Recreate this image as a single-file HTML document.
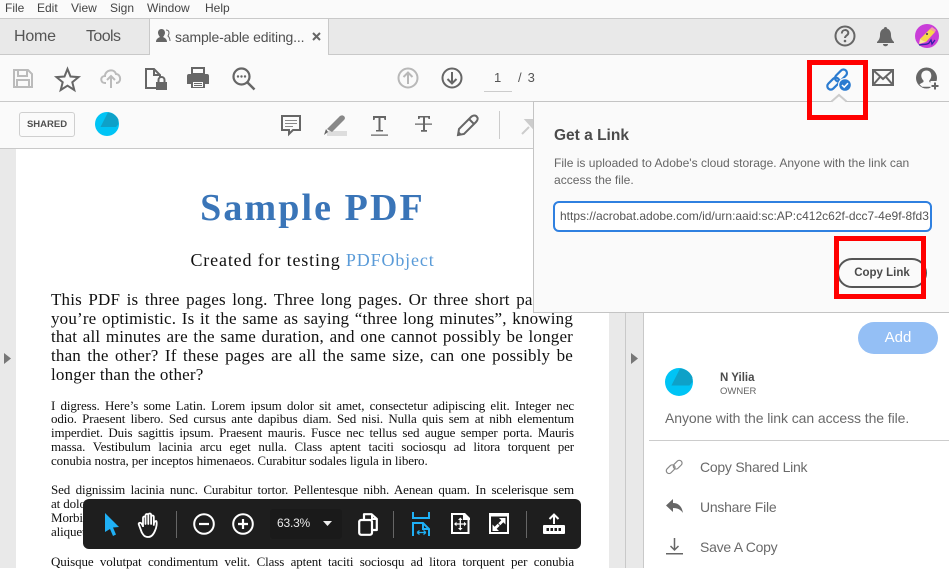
<!DOCTYPE html>
<html><head><meta charset="utf-8"><style>
html,body{margin:0;padding:0}
body{width:949px;height:568px;overflow:hidden;position:relative;background:#fff;font-family:"Liberation Sans",sans-serif;color:#4b4b4b}
.a{position:absolute;white-space:nowrap}
.b{position:absolute}
.m{top:1px;font-size:12px;line-height:14px;color:#444}
.l{position:absolute;left:51px;width:522px;font-family:"Liberation Serif",serif;color:#111;text-align:justify;text-align-last:justify;height:20px;overflow:hidden}
.big{font-size:17px;line-height:18px;letter-spacing:.17px}
.sm{font-size:13px;line-height:14px;left:51px;letter-spacing:-.12px;width:523px}
.left{text-align-last:left}
.r{font-size:14px;line-height:18px;color:#6a6a6a;left:700px;letter-spacing:-.25px}
svg{position:absolute;overflow:visible}
</style></head><body>
<div class="b" style="left:0;top:0;width:949px;height:148px;background:#fafafa"></div>
<div class="b" style="left:0;top:18px;width:949px;height:37px;background:#e9e9e9;border-top:1px solid #c9c9c9;border-bottom:1px solid #c9c9c9;box-sizing:border-box"></div>
<div class="b" style="left:149px;top:18px;width:180px;height:37px;background:#fafafa;border:1px solid #c9c9c9;border-bottom:0;box-sizing:border-box"></div>
<div class="b" style="left:0;top:101px;width:949px;height:1px;background:#c9c9c9"></div>
<div class="b" style="left:0;top:148px;width:949px;height:1px;background:#c9c9c9"></div>
<div class="a m" style="left:5px">File</div><div class="a m" style="left:37px">Edit</div><div class="a m" style="left:71px">View</div><div class="a m" style="left:110px">Sign</div><div class="a m" style="left:147px">Window</div><div class="a m" style="left:205px">Help</div>
<div class="a" style="left:14px;top:27px;font-size:16px;line-height:20px;color:#555;letter-spacing:-.2px">Home</div>
<div class="a" style="left:86px;top:27px;font-size:16px;line-height:20px;color:#555;letter-spacing:-.6px">Tools</div>
<svg style="left:155px;top:29px" width="16" height="14" viewBox="0 0 16 14"><path fill="#666" d="M1 13c0-3 2-4 4-5-1-1-2-3-2-4 0-2 1-4 3.500-4S10 2 10 4c0 1-1 3-2 4 2 1 4 2 4 5z"/><path fill="none" stroke="#666" d="M11 1c2 0 3 1 3 3 0 1-1 3-1 3 1 1 2 2 2 5"/></svg>
<div class="a" style="left:175px;top:28px;font-size:14px;line-height:18px;color:#505050;letter-spacing:-.17px">sample-able editing...</div>
<svg style="left:312px;top:32px" width="9" height="9"><path d="M1 1l7 7M8 1L1 8" stroke="#666" stroke-width="2"/></svg>

<!-- toolbar -->
<svg style="left:13px;top:68px" width="20" height="20" viewBox="0 0 20 20"><path fill="none" stroke="#bbb" stroke-width="2" d="M1 2h14l4 4v13H1zM5 2v6h9V2M4 19v-7h12v7"/></svg>
<svg style="left:55px;top:67px" width="25" height="24" viewBox="0 0 25 24"><path fill="none" stroke="#666" stroke-width="2" d="M12.500 2l3 7.500 8 .6-6.200 5.100 2 7.800-6.800-4.300-6.800 4.300 2-7.800L1.500 10.100l8-.6z"/></svg>
<svg style="left:100px;top:68px" width="22" height="21" viewBox="0 0 22 21"><path fill="none" stroke="#bbb" stroke-width="2" d="M6 15H5c-5 0-5-7 0-7 0-6 9-8 11-2 5 0 6 9 0 9M11 20V9M7 12l4-4 4 4"/></svg>
<svg style="left:145px;top:67px" width="23" height="24" viewBox="0 0 23 24"><path fill="none" stroke="#666" stroke-width="2" d="M12 21H1V2h8l6 6v3M9 2v6h6"/><path fill="#666" d="M11 15h11v8H11z"/><path fill="none" stroke="#666" stroke-width="2" d="M13.500 15v-2a3 3 0 0 1 6 0v2"/></svg>
<svg style="left:187px;top:67px" width="22" height="21" viewBox="0 0 22 21"><path fill="#666" d="M4 0h14v7h2a2 2 0 0 1 2 2v8h-4v-4H4v4H0V9a2 2 0 0 1 2-2h2z"/><path fill="#666" d="M4 13h14v8H4z"/><path fill="#fafafa" d="M6 2h10v4H6zM6 15h10v5H6z"/><path stroke="#666" d="M7 16.500h8M7 18.500h8"/></svg>
<svg style="left:232px;top:67px" width="24" height="24" viewBox="0 0 24 24"><circle cx="9.500" cy="9.500" r="8" fill="none" stroke="#666" stroke-width="2.200"/><path d="M15 15l7.500 7.500" stroke="#666" stroke-width="2.500"/><circle cx="6" cy="9.500" r="1.200" fill="#666"/><circle cx="9.500" cy="9.500" r="1.200" fill="#666"/><circle cx="13" cy="9.500" r="1.200" fill="#666"/></svg>
<svg style="left:397px;top:67px" width="22" height="22" viewBox="0 0 22 22"><circle cx="11" cy="11" r="9.500" fill="none" stroke="#b8b8b8" stroke-width="2"/><path d="M11 17V5.500M6.500 10L11 5.500 15.500 10" fill="none" stroke="#b8b8b8" stroke-width="2"/></svg>
<svg style="left:441px;top:67px" width="22" height="22" viewBox="0 0 22 22"><circle cx="11" cy="11" r="9.500" fill="none" stroke="#666" stroke-width="2"/><path d="M11 5v11.500M6.500 12l4.500 4.500 4.500-4.500" fill="none" stroke="#666" stroke-width="2"/></svg>
<div class="a" style="left:494px;top:70px;font-size:13px;line-height:15px;color:#555">1</div>
<div class="b" style="left:484px;top:91px;width:28px;height:1px;background:#ccc"></div>
<div class="a" style="left:518px;top:70px;font-size:13px;line-height:15px;color:#555;letter-spacing:-.4px">/&nbsp; 3</div>

<svg style="left:827px;top:68px" width="24" height="24" viewBox="0 0 24 24"><g fill="none" stroke="#2b7bd0" stroke-width="2.200"><rect x="0" y="10" width="14" height="7" rx="3.500" transform="rotate(-45 7 13.500) translate(-2 1)"/><rect x="7" y="4" width="14" height="7" rx="3.500" transform="rotate(-45 14 7.500)"/></g><circle cx="18" cy="17" r="7" fill="#fafafa"/><circle cx="18" cy="17" r="5.800" fill="#2b7bd0"/><path d="M15 17l2.200 2.200 3.800-4" fill="none" stroke="#fff" stroke-width="1.500"/></svg>
<svg style="left:872px;top:69px" width="22" height="17" viewBox="0 0 22 17"><path fill="none" stroke="#666" stroke-width="2" d="M1 1h20v15H1zM1 1l10 9 10-9M1 16l7-8M21 16l-7-8"/></svg>
<svg style="left:916px;top:67px" width="24" height="23" viewBox="0 0 24 23"><circle cx="10.500" cy="11" r="10.500" fill="#666"/><path fill="#fafafa" d="M10.500 3.500c3.500 0 4.800 2.700 4.800 5.200 0 2-1 3.800-2 4.800v1.500l3.500 1.800-1.500 3H6l-2.500-2.500 4-2.300v-1.500c-1-1-2.200-2.800-2.200-4.800 0-2.500 1.500-5.200 5.200-5.200z"/><path fill="#fafafa" d="M14.500 14h9.500v9h-9.500z"/><path d="M19 15.500v7M15.500 19h7" stroke="#666" stroke-width="2"/></svg>

<svg style="left:834px;top:25px" width="22" height="22" viewBox="0 0 22 22"><circle cx="11" cy="11" r="9.500" fill="none" stroke="#666" stroke-width="2"/><path d="M7.800 8.500c0-4.500 6.500-4.500 6.500-.5 0 2.500-3.300 2.500-3.300 5" fill="none" stroke="#666" stroke-width="2"/><circle cx="11" cy="16" r="1.300" fill="#666"/></svg>
<svg style="left:877px;top:26px" width="17" height="21" viewBox="0 0 17 21"><path fill="#666" d="M8.500 1c1 0 1.500.6 1.500 1.500C13 3.500 14 6 14 9c0 3 1 5 3 7v1H0v-1c2-2 3-4 3-7 0-3 1-5.500 4-6.500C7 1.600 7.500 1 8.500 1zM6 18h5c0 3-5 3-5 0z"/></svg>
<svg style="left:915px;top:24px" width="24" height="24" viewBox="0 0 24 24"><circle cx="12" cy="12" r="12" fill="#c93ed8"/><path d="M5 15L15 5l5 3-9 10z" fill="#f6d94a"/><path d="M15 5l2-2 4 3-1 2z" fill="#f3a0a0"/><path d="M5 15l-1 5 7-2z" fill="#fbe99a"/><path d="M4 21c5-1 8 0 10-2l2-3 1 4 3-4" fill="none" stroke="#3322aa" stroke-width="1.300"/><circle cx="12" cy="10" r="1" fill="#335"/></svg>

<!-- second toolbar -->
<div class="a" style="left:19px;top:112px;width:56px;height:25px;box-sizing:border-box;border:1.500px solid #cfcfcf;border-radius:3px;background:#fafafa;text-align:center;font-size:9.500px;font-weight:bold;line-height:23px;color:#505050">SHARED</div>
<svg style="left:95px;top:112px" width="24" height="24" viewBox="0 0 24 24"><circle cx="12" cy="12" r="12" fill="#00c4f5"/><path d="M5.500 15L13 .3C18 1 22 4 23.500 8v4l-2.500 3z" fill="#0ea1c8"/></svg>
<svg style="left:281px;top:115px" width="20" height="21" viewBox="0 0 20 21"><path fill="none" stroke="#666" stroke-width="2" d="M1 1h18v14h-7l-4 4v-4H1z"/><path stroke="#888" d="M4 5.500h12M4 8.500h12M4 11.500h8"/></svg>
<svg style="left:324px;top:114px" width="23" height="22" viewBox="0 0 23 22"><path d="M3 17h20v5H3z" fill="#ddd"/><path d="M0 21l4-3-2-3z" fill="#666"/><path d="M3 15L15 3c3-4 8 0 5 3L8 18z" fill="#888"/></svg>
<svg style="left:371px;top:115px" width="17" height="21" viewBox="0 0 17 21"><path fill="#666" d="M2 1h13v4h-1.500L13 3H9.500v12H12v1.500H5V15h2.500V3H4L3.500 5H2zM0 19.500h17v1.300H0z"/></svg>
<svg style="left:415px;top:115px" width="18" height="19" viewBox="0 0 18 19"><path fill="#666" d="M3 1h12v3h-1.500L13 2.500H10V15h2v1.700H6V15h2V2.500H5L4.500 4H3zM0 8.500h17v1.200H0z"/></svg>
<svg style="left:456px;top:114px" width="23" height="23" viewBox="0 0 23 23"><path fill="none" stroke="#666" stroke-width="2" d="M2 21l1-6L15 3c2-2 5-2 6 0 1 1 1 3-1 5L8 20zM13 5l5 5"/><path fill="#666" d="M1 22l1.500-5 3.500 3.500z"/></svg>
<div class="b" style="left:499px;top:111px;width:1px;height:28px;background:#ccc"></div>
<svg style="left:521px;top:118px" width="14" height="18"><path d="M1 16L8 9M5 2h9v10z" stroke="#ccc" stroke-width="2" fill="#ccc"/></svg>

<!-- side areas -->
<div class="b" style="left:0;top:149px;width:16px;height:419px;background:#e9e9e9"></div>
<div class="b" style="left:609px;top:149px;width:35px;height:419px;background:#e9e9e9"></div>
<div class="b" style="left:625px;top:149px;width:1px;height:419px;background:#c9c9c9"></div>
<div class="b" style="left:643px;top:149px;width:1px;height:419px;background:#c9c9c9"></div>
<div class="b" style="left:644px;top:149px;width:305px;height:419px;background:#fff"></div>
<svg style="left:4px;top:353px" width="7" height="11"><path d="M0 0l7 5.500L0 11z" fill="#777"/></svg>
<svg style="left:631px;top:353px" width="7" height="11"><path d="M0 0l7 5.500L0 11z" fill="#777"/></svg>

<!-- pdf -->
<div class="a" style="left:16px;width:593px;text-align:center;top:186px;font-family:'Liberation Serif',serif;font-weight:bold;font-size:38px;line-height:44px;color:#3a75b8;letter-spacing:2.100px">Sample PDF</div>
<div class="a" style="left:16px;width:593px;text-align:center;top:250px;font-family:'Liberation Serif',serif;font-size:18px;line-height:20px;color:#111;letter-spacing:.85px">Created for testing <span style="color:#5a9bd8">PDFObject</span></div>
<div class="l big" style="top:291px">This PDF is three pages long. Three long pages. Or three short pages if</div>
<div class="l big" style="top:310px">you’re optimistic. Is it the same as saying “three long minutes”, knowing</div>
<div class="l big" style="top:328px">that all minutes are the same duration, and one cannot possibly be longer</div>
<div class="l big" style="top:347px">than the other? If these pages are all the same size, can one possibly be</div>
<div class="l big left" style="top:366px">longer than the other?</div>
<div class="l sm" style="top:399px">I digress. Here’s some Latin. Lorem ipsum dolor sit amet, consectetur adipiscing elit. Integer nec</div>
<div class="l sm" style="top:412px">odio. Praesent libero. Sed cursus ante dapibus diam. Sed nisi. Nulla quis sem at nibh elementum</div>
<div class="l sm" style="top:426px">imperdiet. Duis sagittis ipsum. Praesent mauris. Fusce nec tellus sed augue semper porta. Mauris</div>
<div class="l sm" style="top:440px">massa. Vestibulum lacinia arcu eget nulla. Class aptent taciti sociosqu ad litora torquent per</div>
<div class="l sm left" style="top:454px">conubia nostra, per inceptos himenaeos. Curabitur sodales ligula in libero.</div>
<div class="l sm" style="top:483px">Sed dignissim lacinia nunc. Curabitur tortor. Pellentesque nibh. Aenean quam. In scelerisque sem</div>
<div class="l sm left" style="top:497px">at dolor.</div>
<div class="l sm left" style="top:511px">Morbi</div>
<div class="l sm left" style="top:525px">aliquet</div>
<div class="l sm" style="top:555px">Quisque volutpat condimentum velit. Class aptent taciti sociosqu ad litora torquent per conubia</div>

<!-- panel -->
<div class="b" style="left:858px;top:322px;width:80px;height:32px;border-radius:16px;background:#94bff5;color:#fff;text-align:center;font-size:15px;line-height:32px">Add</div>
<svg style="left:665px;top:368px" width="28" height="28" viewBox="0 0 24 24"><circle cx="12" cy="12" r="12" fill="#00c4f5"/><path d="M5.500 15L13 .3C18 1 22 4 23.500 8v4l-2.500 3z" fill="#0ea1c8"/></svg>
<div class="a" style="left:720px;top:371px;font-size:11.500px;line-height:14px;font-weight:bold;color:#4b4b4b">N Yilia</div>
<div class="a" style="left:720px;top:385px;font-size:9.500px;line-height:13px;color:#666">OWNER</div>
<div class="a" style="left:665px;top:409px;font-size:14px;line-height:18px;color:#6a6a6a;letter-spacing:-.08px">Anyone with the link can access the file.</div>
<div class="b" style="left:649px;top:440px;width:300px;height:1px;background:#ccc"></div>
<svg style="left:666px;top:459px" width="16" height="16" viewBox="0 0 16 16"><g fill="none" stroke="#888" stroke-width="1.200"><rect x="-.5" y="7.500" width="10" height="5.500" rx="2.700" transform="rotate(-45 4.500 10)"/><rect x="6.500" y="3" width="10" height="5.500" rx="2.700" transform="rotate(-45 11.500 5.500)"/></g></svg>
<div class="a r" style="top:458px">Copy Shared Link</div>
<svg style="left:666px;top:499px" width="17" height="14" viewBox="0 0 17 14"><path fill="#666" d="M7 0v4c6 0 9 4 10 10-2-3-5-5-10-5v4L0 6.500z"/></svg>
<div class="a r" style="top:498px">Unshare File</div>
<svg style="left:666px;top:538px" width="17" height="17" viewBox="0 0 17 17"><path d="M8.500 0v11M4.500 8l4 4 4-4" fill="none" stroke="#666" stroke-width="1.500"/><path d="M0 15h17v1.500H0z" fill="#666"/></svg>
<div class="a r" style="top:538px">Save A Copy</div>

<!-- popover -->
<div class="b" style="left:533px;top:101px;width:417px;height:212px;box-sizing:border-box;background:#fafafa;border:1px solid #c4c4c4;border-right:0"></div>
<svg style="left:829px;top:93px" width="20" height="11"><path d="M3 9L10 2l7 7z" fill="#fafafa"/><path d="M2.500 8.500L10 2l7.500 6.500" fill="none" stroke="#ccc" stroke-width="2"/></svg>
<div class="a" style="left:554px;top:127px;font-size:15.500px;line-height:18px;font-weight:bold;color:#4b4b4b">Get a Link</div>
<div class="a" style="left:554px;top:155px;font-size:12.050px;line-height:16.500px;color:#666">File is uploaded to Adobe's cloud storage. Anyone with the link can<br>access the file.</div>
<div class="b" style="left:553px;top:201px;width:379px;height:31px;box-sizing:border-box;border:2px solid #2f80e0;border-radius:6px;background:#fff"></div>
<div class="a" style="left:560px;top:208px;font-size:12px;line-height:17px;color:#555;width:370px;overflow:hidden">https://acrobat.adobe.com/id/urn:aaid:sc:AP:c412c62f-dcc7-4e9f-8fd3</div>
<div class="b" style="left:837px;top:258px;width:90px;height:30px;box-sizing:border-box;border:2px solid #555;border-radius:15px;background:#fafafa;text-align:center;font-size:11.500px;font-weight:bold;line-height:27px;color:#4b4b4b">Copy Link</div>

<!-- red boxes -->
<div class="b" style="left:807px;top:60px;width:61px;height:60px;box-sizing:border-box;border:5px solid #f00"></div>
<div class="b" style="left:834px;top:236px;width:92px;height:63px;box-sizing:border-box;border:5px solid #f00"></div>

<!-- zoom bar -->
<div class="b" style="left:83px;top:499px;width:498px;height:50px;background:#1e1e1e;border-radius:6px"></div>
<svg style="left:105px;top:513px" width="14" height="23" viewBox="0 0 14 23"><path fill="#1fb0f5" d="M0 0l14 14-6 .5 3 7-3 1.500-3-7L0 19z"/></svg>
<svg style="left:138px;top:512px" width="23" height="25" viewBox="0 0 23 25"><path fill="none" stroke="#fff" stroke-width="1.800" stroke-linejoin="round" d="M5 15V6c0-2 2.500-2 2.500 0v6-8.500c0-2 2.800-2 2.800 0V12 3c0-2 2.800-2 2.800 0v9-7c0-2 2.700-2 2.700 0v8c0-2 .3-4 2.500-4 1 2 0 7-1 9-1.500 4-3.500 7-7 7-4 0-5-2-6.500-4.500L1 13c-1-2 1-3 2.500-1.500L5 14"/></svg>
<div class="b" style="left:176px;top:511px;width:1px;height:27px;background:#666"></div>
<svg style="left:193px;top:513px" width="22" height="22" viewBox="0 0 22 22"><circle cx="11" cy="11" r="9.800" fill="none" stroke="#fff" stroke-width="2"/><path d="M6 11h10" stroke="#fff" stroke-width="2.200"/></svg>
<svg style="left:232px;top:513px" width="22" height="22" viewBox="0 0 22 22"><circle cx="11" cy="11" r="9.800" fill="none" stroke="#fff" stroke-width="2"/><path d="M6 11h10M11 6v10" stroke="#fff" stroke-width="2.200"/></svg>
<div class="b" style="left:270px;top:509px;width:72px;height:30px;background:#1a1a1a;border-radius:3px"></div>
<div class="a" style="left:277px;top:515px;font-size:12px;line-height:16px;color:#e8e8e8;letter-spacing:-.2px">63.3%</div>
<svg style="left:323px;top:521px" width="9" height="5"><path d="M0 0h9L4.500 5z" fill="#eee"/></svg>
<svg style="left:358px;top:513px" width="20" height="23" viewBox="0 0 20 23"><path fill="none" stroke="#fff" stroke-width="2.200" stroke-linejoin="round" d="M6 6V1.200h7.500L18.800 6v11H14"/><path fill="#fff" d="M13 1h2v4h4v2h-6z"/><rect x="1.200" y="7" width="12.800" height="14.800" rx="2" fill="none" stroke="#fff" stroke-width="2.200"/></svg>
<div class="b" style="left:393px;top:511px;width:1px;height:27px;background:#666"></div>
<svg style="left:412px;top:512px" width="19" height="25" viewBox="0 0 19 25"><path fill="none" stroke="#1fb0f5" stroke-width="2" d="M1 0v6h16V0M1 24V11h10l6 6v7M11 11v6h6"/><path d="M5 20.500h9M5 20.500l2.500-2M5 20.500l2.500 2M14 20.500l-2.500-2M14 20.500l-2.500 2" stroke="#1fb0f5" stroke-width="1.200" fill="none"/></svg>
<svg style="left:451px;top:513px" width="19" height="22" viewBox="0 0 19 22"><path fill="none" stroke="#fff" stroke-width="2" d="M1 1h11l5.500 5.500V20H1z"/><path fill="#fff" d="M12 0h2l5 5v2h-7z"/><path d="M9.300 6v10M4.500 11h9.500" stroke="#fff" stroke-width="1.300"/><path fill="#fff" d="M9.300 4.500l2.300 2.500h-4.600zM9.300 17.500l2.300-2.500h-4.600zM3 11l2.500-2.300v4.600zM15.500 11L13 8.700v4.600z"/></svg>
<svg style="left:489px;top:513px" width="20" height="21" viewBox="0 0 20 21"><rect x="1" y="1" width="18" height="19" fill="none" stroke="#fff" stroke-width="2"/><rect x="0" y="0" width="20" height="3.500" fill="#fff"/><path fill="#fff" d="M16.500 5v6.500l-2.200-2.200-3 3-2-2 3-3L10 5zM3.500 18v-6.500l2.200 2.200 3-3 2 2-3 3 2.300 2.300z"/></svg>
<div class="b" style="left:526px;top:511px;width:1px;height:27px;background:#666"></div>
<svg style="left:543px;top:513px" width="22" height="21" viewBox="0 0 22 21"><path d="M11 11V1.500M6.500 6L11 1.500 15.500 6" fill="none" stroke="#fff" stroke-width="2"/><rect x="0" y="12" width="22" height="9" rx="1" fill="#fff"/><g fill="#1e1e1e"><rect x="3.500" y="15" width="2.500" height="3"/><rect x="7.500" y="15" width="2.500" height="3"/><rect x="11.500" y="15" width="2.500" height="3"/><rect x="15.500" y="15" width="2.500" height="3"/></g></svg>
</body></html>
